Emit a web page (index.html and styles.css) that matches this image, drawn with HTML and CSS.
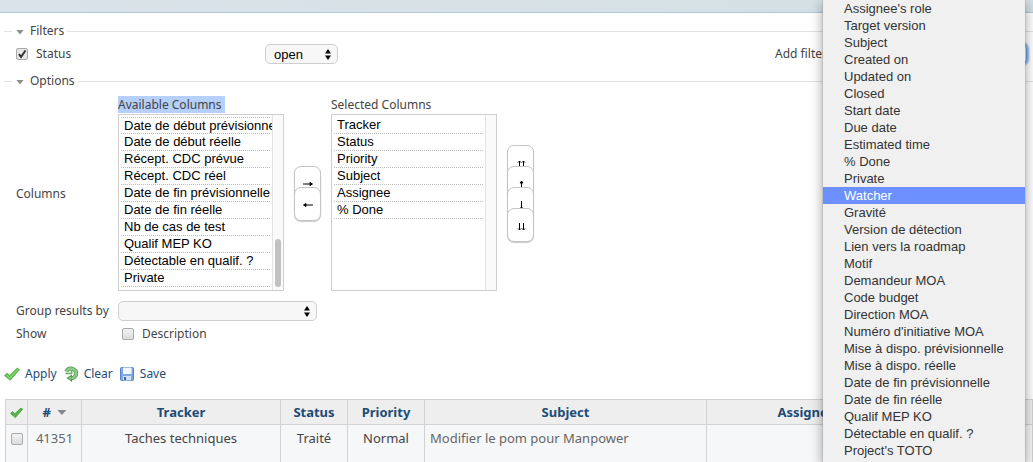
FILE: index.html
```
<!DOCTYPE html>
<html lang="en">
<head>
    <meta charset="UTF-8">
    <meta name="viewport" content="width=device-width, initial-scale=1.0">
    <title>Issues</title>
    <link rel="stylesheet" href="styles.css">
</head>
<body>
    <div class="header"></div>

    <form class="query">
        <fieldset>
            <legend><span class="toggle"></span>Filters</legend>
            <div class="filter-row">
                <div class="filter-name">
                    <input type="checkbox" id="cbStatus" checked>
                    <label for="cbStatus">Status</label>
                </div>
                <select class="dropdown operator" aria-label="Status operator">
                    <option>open</option>
                </select>
                <div class="add-filter">
                    <label for="addFilter">Add filter</label>
                    <select class="dropdown focused" id="addFilter">
                        <option></option>
                    </select>
                </div>
            </div>
        </fieldset>

        <fieldset>
            <legend><span class="toggle"></span>Options</legend>
            <div class="options">
                <span class="columns-label">Columns</span>
                <div class="columns">
                    <div class="column-list">
                        <label for="available"><span class="marked">Available Columns&nbsp;</span></label>
                        <div class="listbox scrolled">
                            <select id="available" size="10" multiple>
                                <option>Date de début prévisionnelle</option>
                                <option>Date de début réelle</option>
                                <option>Récept. CDC prévue</option>
                                <option>Récept. CDC réel</option>
                                <option>Date de fin prévisionnelle</option>
                                <option>Date de fin réelle</option>
                                <option>Nb de cas de test</option>
                                <option>Qualif MEP KO</option>
                                <option>Détectable en qualif. ?</option>
                                <option>Private</option>
                            </select>
                            <div class="track"><div class="thumb"></div></div>
                        </div>
                    </div>
                    <div class="stack">
                        <button type="button" aria-label="Add">
                            <svg width="12" height="8" viewBox="0 0 12 8"><path d="M1 4h9M8 2.500L10.500 4L8 5.500z"/></svg>
                        </button>
                        <button type="button" aria-label="Remove">
                            <svg width="12" height="8" viewBox="0 0 12 8"><path d="M11 4H2M4 2.500L1.500 4L4 5.500z"/></svg>
                        </button>
                    </div>
                    <div class="column-list">
                        <label for="selected">Selected Columns</label>
                        <div class="listbox">
                            <select id="selected" size="10" multiple>
                                <option>Tracker</option>
                                <option>Status</option>
                                <option>Priority</option>
                                <option>Subject</option>
                                <option>Assignee</option>
                                <option>% Done</option>
                            </select>
                            <div class="track"></div>
                        </div>
                    </div>
                    <div class="stack vertical">
                        <button type="button" aria-label="Top">
                            <svg width="10" height="10" viewBox="0 0 10 10"><path d="M3.500 9V2M2 3.500L3.500 2L5 3.500M7.500 9V2M6 3.500L7.500 2L9 3.500"/></svg>
                        </button>
                        <button type="button" aria-label="Up">
                            <svg width="10" height="10" viewBox="0 0 10 10"><path d="M5.500 10V1M4 3L5.500 1L7 3z"/></svg>
                        </button>
                        <button type="button" aria-label="Down">
                            <svg width="10" height="10" viewBox="0 0 10 10"><path d="M5.500 0V9M4 7L5.500 9L7 7z"/></svg>
                        </button>
                        <button type="button" aria-label="Bottom">
                            <svg width="10" height="10" viewBox="0 0 10 10"><path d="M3.500 1V8M2 6.500L3.500 8L5 6.500M7.500 1V8M6 6.500L7.500 8L9 6.500"/></svg>
                        </button>
                    </div>
                </div>

                <label for="groupBy">Group results by</label>
                <select class="dropdown group-by" id="groupBy">
                    <option></option>
                </select>

                <span>Show</span>
                <div class="show">
                    <input type="checkbox" id="cbDescription">
                    <label for="cbDescription">Description</label>
                </div>
            </div>
        </fieldset>

        <p class="buttons">
            <a href="#">
                <svg width="16" height="16" viewBox="0 0 16 16"><path d="M.5 9.500L3 7.200l2.800 2.300L13.300 2l2.200 1.700L6.200 14.200z" fill="#62c850" stroke="#45a83c" stroke-width=".8"/><path d="M2.500 9l3.500 3L14 3.500" fill="none" stroke="#8fdd7c"/></svg>
                Apply
            </a>
            <a href="#">
                <svg width="16" height="16" viewBox="0 0 16 16"><path d="M3 5.500C5 2.500 8 2 10.500 3.200c3 1.600 3.300 5.300 1.500 7.300-1 1.200-2.200 1.700-3.500 1.700" fill="none" stroke="#4f9a50" stroke-width="4"/><path d="M9 8.500V16L3.500 12z" fill="#4f9a50"/><path d="M3 5.500C5 2.500 8 2 10.500 3.200c3 1.600 3.300 5.300 1.500 7.300-1 1.200-2.200 1.700-3.500 1.700" fill="none" stroke="#8dcb89" stroke-width="2.400"/><path d="M8 10.500v3.500L5.300 12z" fill="#8dcb89"/><path d="M2.500 7.500h5.300c1.500 0 1.500-2 0-2" fill="none" stroke="#62aa60" stroke-width="1.500"/></svg>
                Clear
            </a>
            <a href="#">
                <svg width="16" height="16" viewBox="0 0 16 16"><rect x="1.500" y="1.500" width="13" height="13" rx="1" fill="#80a8e6" stroke="#5a80c4"/><path d="M4 1.500h8.500V8H4z" fill="#f2f6fd"/><path d="M4 10h8v4.500H4z" fill="#d3e0f4"/><path d="M5 11h2v3H5z" fill="#3f66a8"/></svg>
                Save
            </a>
        </p>
    </form>

    <table class="issues">
        <colgroup>
            <col class="col-check">
            <col class="col-id">
            <col class="col-tracker">
            <col class="col-status">
            <col class="col-priority">
            <col class="col-subject">
            <col class="col-assignee">
            <col>
        </colgroup>
        <thead>
            <tr>
                <th>
                    <a href="#" aria-label="Check all"><svg width="13" height="13" viewBox="0 0 16 16"><path d="M.8 9.200L3 7l3 2.500L13.500 2.500l2 1.500L6.500 14.200z" fill="#55b848" stroke="#3c9635"/></svg></a>
                </th>
                <th><a href="#"># <span class="sort"></span></a></th>
                <th><a href="#">Tracker</a></th>
                <th><a href="#">Status</a></th>
                <th><a href="#">Priority</a></th>
                <th><a href="#">Subject</a></th>
                <th><a href="#">Assignee</a></th>
                <th></th>
            </tr>
        </thead>
        <tbody>
            <tr>
                <td><input type="checkbox" aria-label="Select 41351"></td>
                <td><a href="#">41351</a></td>
                <td>Taches techniques</td>
                <td>Traité</td>
                <td>Normal</td>
                <td class="subject"><a href="#">Modifier le pom pour Manpower</a></td>
                <td></td>
                <td></td>
            </tr>
        </tbody>
    </table>

    <ul class="menu" role="listbox" aria-label="Add filter">
        <li role="option">Assignee's role</li>
        <li role="option">Target version</li>
        <li role="option">Subject</li>
        <li role="option">Created on</li>
        <li role="option">Updated on</li>
        <li role="option">Closed</li>
        <li role="option">Start date</li>
        <li role="option">Due date</li>
        <li role="option">Estimated time</li>
        <li role="option">% Done</li>
        <li role="option">Private</li>
        <li role="option" class="active" aria-selected="true">Watcher</li>
        <li role="option">Gravité</li>
        <li role="option">Version de détection</li>
        <li role="option">Lien vers la roadmap</li>
        <li role="option">Motif</li>
        <li role="option">Demandeur MOA</li>
        <li role="option">Code budget</li>
        <li role="option">Direction MOA</li>
        <li role="option">Numéro d'initiative MOA</li>
        <li role="option">Mise à dispo. prévisionnelle</li>
        <li role="option">Mise à dispo. réelle</li>
        <li role="option">Date de fin prévisionnelle</li>
        <li role="option">Date de fin réelle</li>
        <li role="option">Qualif MEP KO</li>
        <li role="option">Détectable en qualif. ?</li>
        <li role="option">Project's TOTO</li>
    </ul>
</body>
</html>
```
FILE: styles.css
```
* {
    box-sizing: border-box;
}

body {
    margin: 0;
    background: #fff;
    color: #444;
    font-family: "Noto Sans", "Open Sans", sans-serif;
    font-size: 12px;
    line-height: 16px;
    min-height: 100vh;
    position: relative;
}

a {
    color: #1d4b77;
    text-decoration: none;
}

.header {
    height: 13px;
    background: linear-gradient(90deg, #dae3e9, #d3dfe4);
    border-bottom: 1px solid #b0ccda;
}

.query {
    padding: 10px 0 0 4px;
}

fieldset {
    margin: 0;
    padding: 0 0 0 12px;
    border: 0;
    border-top: 1px solid #e0e2e3;
    min-width: 0;
}

legend {
    display: flex;
    align-items: center;
    gap: 6px;
    margin-left: -4px;
    padding: 0 3px 0 4px;
}

.toggle {
    width: 8px;
    height: 5px;
    margin-top: 2px;
    background: #8e8e8e;
    clip-path: polygon(0 0, 100% 0, 50% 100%);
}

input[type="checkbox"] {
    appearance: none;
    flex: none;
    width: 12px;
    height: 12px;
    margin: 0;
    border: 1px solid #a9a9a9;
    border-radius: 2px;
    background: linear-gradient(#f2f2f2, #dcdcdc);
}

input[type="checkbox"]:checked {
    background: #e6e6e6 url("data:image/svg+xml,%3Csvg xmlns='http://www.w3.org/2000/svg' viewBox='0 0 10 10'%3E%3Cpath d='M2 5l2 3l4.500-6.500' fill='none' stroke='%23333' stroke-width='2'/%3E%3C/svg%3E") center / 10px no-repeat;
}

.dropdown {
    appearance: none;
    height: 20px;
    padding: 0 24px 0 8px;
    border: 1px solid #cfcfcf;
    border-radius: 5px;
    background: #f7f7f7 url("data:image/svg+xml,%3Csvg xmlns='http://www.w3.org/2000/svg' viewBox='0 0 6 11'%3E%3Cpath d='M0 4.500L3 0l3 4.500zM0 6.500L3 11l3-4.500z'/%3E%3C/svg%3E") right 6px center / 6px 11px no-repeat;
    color: #000;
    font-family: "Liberation Sans", Arial, sans-serif;
    font-size: 13px;
}

.filter-row {
    display: flex;
    align-items: center;
    height: 20px;
    margin: 5px 0 9px;
}

.filter-name {
    display: flex;
    align-items: center;
    gap: 8px;
    width: 249px;
}

.operator {
    width: 73px;
}

.add-filter {
    display: flex;
    align-items: center;
    gap: 8px;
    margin-left: auto;
    padding-right: 6px;
}

.add-filter .dropdown {
    width: 192px;
}

.focused {
    border-color: #6d9fdc;
    box-shadow: 0 0 2px 2px #8ab6ee;
}

.options {
    display: grid;
    grid-template-columns: 96px 1fr;
    column-gap: 6px;
    align-items: center;
}

.columns-label {
    padding-top: 8px;
}

.columns {
    display: flex;
    padding-top: 8px;
}

.marked {
    background: #b5d0fa;
}

.column-list label {
    display: block;
    height: 17px;
    line-height: 16px;
}

.listbox {
    display: flex;
    width: 166px;
    height: 177px;
    border: 1px solid #cfcfcf;
    background: #fff;
}

.listbox select {
    flex: 1;
    min-width: 0;
    padding: 2px 2px 0;
    border: 0;
    outline: 0;
    background: transparent;
    color: #000;
    font-family: "Liberation Sans", Arial, sans-serif;
    font-size: 13px;
    overflow: hidden;
}

.listbox option {
    height: 17px;
    min-height: 17px;
    padding: 0 0 0 3px;
    border-bottom: 1px dotted #bbb;
    line-height: 16px;
}

.scrolled option:first-child {
    border-top: 1px dotted #bbb;
}

.track {
    display: flex;
    align-items: flex-end;
    width: 11px;
    padding: 0 2px 3px;
    border-left: 1px solid #e4e4e4;
    background: #fafafa;
}

.thumb {
    width: 6px;
    height: 48px;
    border-radius: 3px;
    background: #c1c1c1;
}

.stack {
    display: flex;
    flex-direction: column;
    justify-content: center;
    padding: 0 10px 2px;
}

.stack button {
    display: flex;
    align-items: center;
    justify-content: center;
    width: 27px;
    height: 34px;
    padding: 2px 0 0;
    border: 1px solid #c4c4c4;
    border-radius: 7px;
    background: #fff;
    box-shadow: 0 1px 1px #ccc;
}

.stack button + button {
    margin-top: -13px;
}

.stack path {
    stroke: #000;
    fill: #000;
}

.vertical path {
    fill: none;
}

.vertical button {
    padding-top: 4px;
}

.group-by {
    width: 199px;
    margin: 10px 0 5px;
}

.options label[for="groupBy"] {
    padding-top: 4px;
}

.show {
    display: flex;
    align-items: center;
    gap: 8px;
    padding-left: 4px;
}

.buttons {
    display: flex;
    gap: 6px;
    margin: 24px 0 17px;
}

.buttons a {
    display: flex;
    align-items: center;
    gap: 5px;
}

.issues {
    width: calc(100% - 5px);
    margin-left: 5px;
    border-collapse: collapse;
    table-layout: fixed;
    font-size: 13px;
}

.issues th,
.issues td {
    padding: 0;
    border: 1px solid #d2d2d2;
    text-align: center;
}

.issues th {
    height: 25px;
    background: #eee;
}

.issues tbody td {
    height: 37px;
    padding-top: 5px;
    border-bottom: 0;
    background: #f6f7f9;
    vertical-align: top;
}

.issues td a {
    color: #666;
}

.issues tbody .subject {
    padding-left: 5px;
    text-align: left;
}

.issues td input {
    vertical-align: -2px;
}

.issues svg {
    display: block;
    margin: auto;
}

.col-check {
    width: 22px;
}

.col-id {
    width: 54px;
}

.col-tracker {
    width: 199px;
}

.col-status {
    width: 67px;
}

.col-priority {
    width: 77px;
}

.col-subject {
    width: 282px;
}

.col-assignee {
    width: 200px;
}

.sort {
    display: inline-block;
    width: 9px;
    height: 5px;
    margin-left: 3px;
    vertical-align: 2px;
    background: #888;
    clip-path: polygon(0 0, 100% 0, 50% 100%);
}

/* open list of the "Add filter" drop-down */
.menu {
    position: absolute;
    top: 0;
    right: 8px;
    width: 202px;
    min-height: 100%;
    margin: 0;
    padding: 0;
    background: #f0f0f0;
    box-shadow: 0 0 1px #777, 0 4px 12px rgba(0, 0, 0, 0.4);
    color: #333;
    font-family: "Liberation Sans", Arial, sans-serif;
    font-size: 13px;
    line-height: 17px;
    list-style: none;
}

.menu li {
    padding-left: 21px;
}

.menu .active {
    background: #6c91ff;
    color: #fff;
}
```
